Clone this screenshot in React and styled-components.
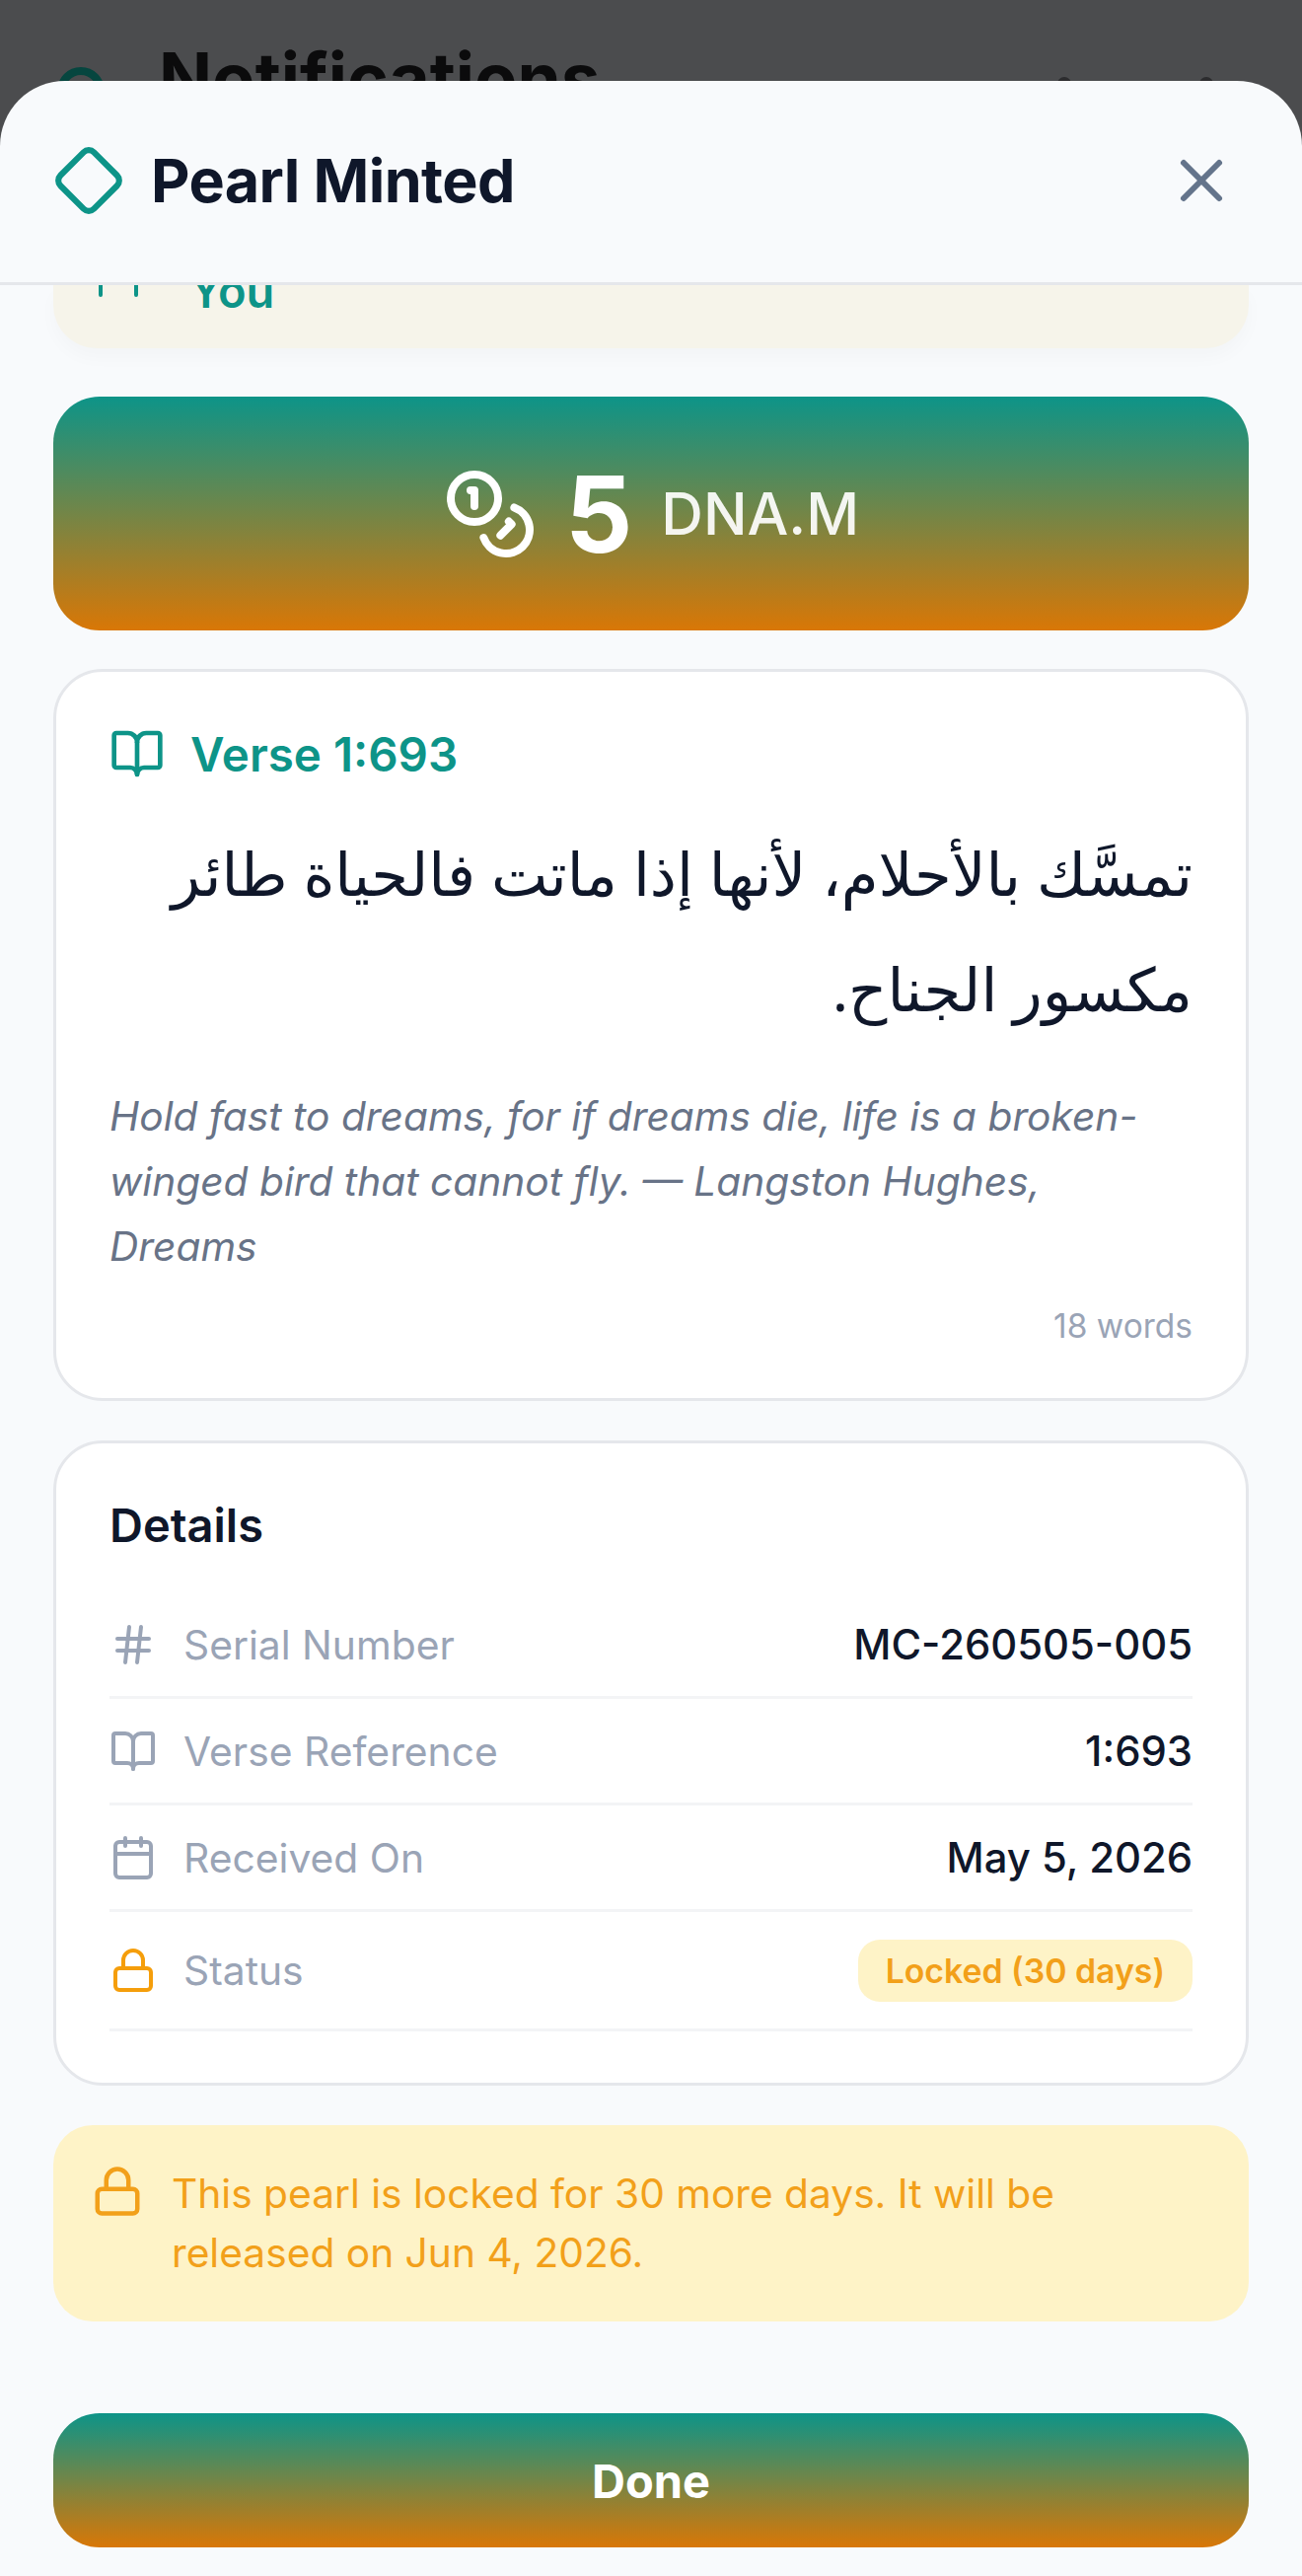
import React from "react";
import styled, { createGlobalStyle } from "styled-components";
import { BookOpen, Calendar, Coins, Diamond, Hash, Lock, X } from "lucide-react";

const GlobalStyle = createGlobalStyle`
  * { box-sizing: border-box; }
  html, body { margin: 0; padding: 0; }
  body { font-family: Inter, "Noto Sans", sans-serif; background: #4b4c4e; }
`;

const Screen = styled.div`
  width: 1320px;
  height: 2611px;
  display: flex;
  flex-direction: column;
  overflow: hidden;
  background: #4b4c4e;
`;

const Backdrop = styled.div`
  height: 82px;
  flex: none;
  overflow: hidden;
  display: flex;
  align-items: flex-start;
  padding: 39px 90px 0 58px;
`;

const BackdropRing = styled.span`
  width: 48px;
  height: 48px;
  margin-top: 29px;
  flex: none;
  border-radius: 50%;
  border: 8px solid #06463f;
`;

const BackdropTitle = styled.span`
  margin-left: 55px;
  font-size: 71px;
  line-height: 80px;
  font-weight: 700;
  color: #0b0b0c;
`;

const BackdropDots = styled.div`
  margin-left: auto;
  display: flex;
  gap: 130px;
  padding-top: 39px;

  span {
    width: 14px;
    height: 14px;
    border-radius: 50%;
    background: #2c2c2e;
  }
`;

const Sheet = styled.div`
  flex: 1;
  display: flex;
  flex-direction: column;
  min-height: 0;
  background: #f8fafc;
  border-radius: 66px 66px 0 0;
  overflow: hidden;
`;

const SheetHeader = styled.header`
  height: 207px;
  flex: none;
  display: flex;
  align-items: center;
  padding: 0 66px 3px 53px;
  border-bottom: 3px solid #e5e7eb;
`;

const SheetTitle = styled.h1`
  margin: 0 0 0 26px;
  font-size: 61px;
  line-height: 72px;
  font-weight: 700;
  letter-spacing: -0.6px;
  color: #0f172a;
`;

const CloseButton = styled.button`
  margin-left: auto;
  padding: 0;
  display: flex;
  border: 0;
  background: none;
  color: #64748b;
`;

const SheetBody = styled.div`
  flex: 1;
  min-height: 0;
  display: flex;
  flex-direction: column;
  padding: 0 54px;
`;

const ScrolledCard = styled.div`
  height: 64px;
  flex: none;
  margin-bottom: 49px;
  overflow: hidden;
  display: flex;
  gap: 52px;
  padding-left: 46px;
  background: #f6f4ea;
  border-radius: 0 0 44px 44px;
  box-shadow: 0 10px 18px rgba(15, 23, 42, 0.025);
`;

const ScrolledIcon = styled.svg`
  flex: none;
  margin-top: -2px;
`;

const ScrolledName = styled.span`
  margin-top: -22px;
  font-size: 47px;
  line-height: 56px;
  font-weight: 600;
  color: #0d9488;
`;

const RewardCard = styled.section`
  height: 237px;
  flex: none;
  margin-bottom: 39px;
  display: flex;
  align-items: center;
  justify-content: center;
  color: #fff;
  border-radius: 47px;
  background: linear-gradient(180deg, #0d9488, #d97706);
`;

const RewardAmount = styled.span`
  margin-left: 28px;
  font-size: 107px;
  line-height: 120px;
  font-weight: 700;
`;

const RewardUnit = styled.span`
  margin-left: 29px;
  font-size: 59px;
  line-height: 72px;
  font-weight: 500;
  color: rgba(255, 255, 255, 0.92);
`;

const Card = styled.section`
  flex: none;
  height: ${p => p.$height}px;
  margin-bottom: ${p => p.$gap}px;
  padding: 55px 54px 0;
  background: #fff;
  border: 3px solid #e5e7eb;
  border-radius: 50px;
`;

const VerseLabel = styled.div`
  display: flex;
  align-items: center;
  gap: 26px;
  height: 56px;
  font-size: 47.5px;
  font-weight: 600;
  color: #0d9488;
`;

const ArabicText = styled.p`
  margin: 34px 0 0;
  direction: rtl;
  font-family: "Noto Sans", "DejaVu Sans", sans-serif;
  font-size: 61px;
  line-height: 117px;
  color: #0f172a;
`;

const Translation = styled.p`
  margin: 39px 0 0;
  font-size: 40.7px;
  line-height: 66px;
  font-style: italic;
  color: #687387;
`;

const WordCount = styled.div`
  margin-top: 27px;
  text-align: right;
  font-size: 33.5px;
  line-height: 40px;
  color: #9aa4b6;
`;

const DetailsTitle = styled.h2`
  margin: 0 0 40px;
  font-size: 47px;
  line-height: 56px;
  font-weight: 600;
  color: #0f172a;
`;

const Row = styled.div`
  height: ${p => p.$height}px;
  display: flex;
  align-items: center;
  border-bottom: 3px solid #f3f4f6;
`;

const RowIcon = styled.span`
  width: 48px;
  flex: none;
  display: flex;
  justify-content: center;
  color: ${p => (p.$amber ? "#f59e0b" : "#9aa4b6")};
`;

const RowLabel = styled.span`
  margin-left: 27px;
  font-size: 40.8px;
  color: #9aa4b6;
`;

const RowValue = styled.span`
  margin-left: auto;
  font-size: 41.8px;
  font-weight: 500;
  color: #0f172a;
`;

const Badge = styled.span`
  margin-left: auto;
  height: 63px;
  display: flex;
  align-items: center;
  padding: 0 28px;
  font-size: 33.8px;
  font-weight: 600;
  color: #f2a01a;
  background: #fef3c7;
  border-radius: 22px;
`;

const LockNotice = styled.div`
  height: 199px;
  flex: none;
  margin-bottom: 93px;
  display: flex;
  gap: 28px;
  padding: 40px 38px 0;
  background: #fef3c7;
  border-radius: 40px;
  color: #f2a01a;
  font-size: 40.7px;
  line-height: 60px;

  svg {
    flex: none;
  }
`;

const DoneButton = styled.button`
  height: 136px;
  flex: none;
  border: 0;
  border-radius: 47px;
  font-family: inherit;
  font-size: 47px;
  font-weight: 700;
  color: #fff;
  background: linear-gradient(180deg, #0d9488, #d97706);
`;

const details = [
  { icon: Hash, label: "Serial Number", value: "MC-260505-005" },
  { icon: BookOpen, label: "Verse Reference", value: "1:693" },
  { icon: Calendar, label: "Received On", value: "May 5, 2026" },
];

function App() {
  return (
    <Screen>
      <GlobalStyle />
      <Backdrop>
        <BackdropRing />
        <BackdropTitle>Notifications</BackdropTitle>
        <BackdropDots>
          <span />
          <span />
        </BackdropDots>
      </Backdrop>

      <Sheet>
        <SheetHeader>
          <Diamond size={74} color="#0d9488" strokeWidth={2} />
          <SheetTitle>Pearl Minted</SheetTitle>
          <CloseButton aria-label="Close">
            <X size={72} strokeWidth={2} />
          </CloseButton>
        </SheetHeader>

        <SheetBody>
          <ScrolledCard>
            <ScrolledIcon width="40" height="14" viewBox="0 0 40 14">
              <path d="M2 0v12M38 0v12" stroke="#0d9488" strokeWidth="4" strokeLinecap="round" />
            </ScrolledIcon>
            <ScrolledName>You</ScrolledName>
          </ScrolledCard>

          <RewardCard>
            <Coins size={96} strokeWidth={2} />
            <RewardAmount>5</RewardAmount>
            <RewardUnit>DNA.M</RewardUnit>
          </RewardCard>

          <Card $height={742} $gap={40}>
            <VerseLabel>
              <BookOpen size={56} strokeWidth={2} />
              Verse 1:693
            </VerseLabel>
            <ArabicText>تمسَّك بالأحلام، لأنها إذا ماتت فالحياة طائر مكسور الجناح.</ArabicText>
            <Translation>
              Hold fast to dreams, for if dreams die, life is a broken-winged bird that cannot
              fly. — Langston Hughes, Dreams
            </Translation>
            <WordCount>18 words</WordCount>
          </Card>

          <Card $height={654} $gap={40}>
            <DetailsTitle>Details</DetailsTitle>
            {details.map(({ icon: Icon, label, value }) => (
              <Row key={label} $height={108}>
                <RowIcon>
                  <Icon size={48} strokeWidth={2} />
                </RowIcon>
                <RowLabel>{label}</RowLabel>
                <RowValue>{value}</RowValue>
              </Row>
            ))}
            <Row $height={121}>
              <RowIcon $amber>
                <Lock size={48} strokeWidth={2} />
              </RowIcon>
              <RowLabel>Status</RowLabel>
              <Badge>Locked (30 days)</Badge>
            </Row>
          </Card>

          <LockNotice>
            <Lock size={54} strokeWidth={2} />
            <span>This pearl is locked for 30 more days. It will be released on Jun 4, 2026.</span>
          </LockNotice>

          <DoneButton>Done</DoneButton>
        </SheetBody>
      </Sheet>
    </Screen>
  );
}

export default App;
